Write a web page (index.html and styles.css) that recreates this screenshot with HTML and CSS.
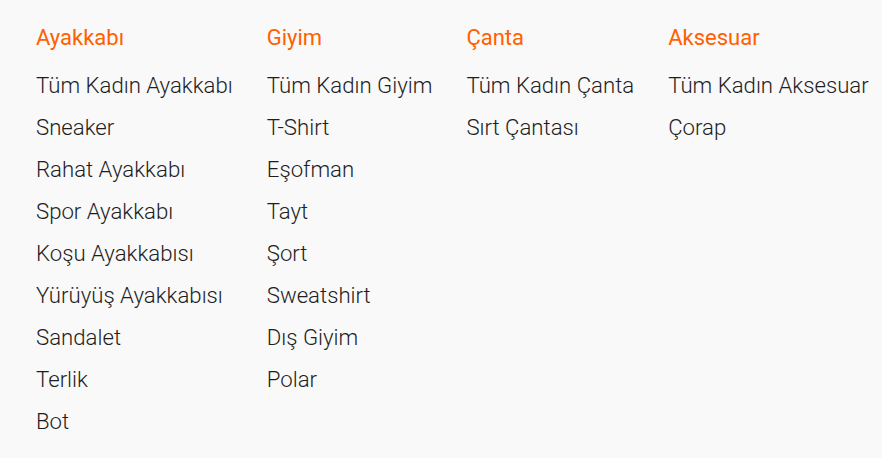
FILE: index.html
```html
<!DOCTYPE html>
<html lang="tr">
<head>
<meta charset="utf-8">
<link rel="stylesheet" href="styles.css">
</head>
<body>
<nav class="menu">
  <div class="col">
    <h3 class="title">Ayakkabı</h3>
    <ul class="list">
      <li>Tüm Kadın Ayakkabı</li>
      <li>Sneaker</li>
      <li>Rahat Ayakkabı</li>
      <li>Spor Ayakkabı</li>
      <li>Koşu Ayakkabısı</li>
      <li>Yürüyüş Ayakkabısı</li>
      <li>Sandalet</li>
      <li>Terlik</li>
      <li>Bot</li>
    </ul>
  </div>
  <div class="col">
    <h3 class="title">Giyim</h3>
    <ul class="list">
      <li>Tüm Kadın Giyim</li>
      <li>T-Shirt</li>
      <li>Eşofman</li>
      <li>Tayt</li>
      <li>Şort</li>
      <li>Sweatshirt</li>
      <li>Dış Giyim</li>
      <li>Polar</li>
    </ul>
  </div>
  <div class="col">
    <h3 class="title">Çanta</h3>
    <ul class="list">
      <li>Tüm Kadın Çanta</li>
      <li>Sırt Çantası</li>
    </ul>
  </div>
  <div class="col">
    <h3 class="title">Aksesuar</h3>
    <ul class="list">
      <li>Tüm Kadın Aksesuar</li>
      <li>Çorap</li>
    </ul>
  </div>
</nav>
</body>
</html>
```
FILE: styles.css
```css
html, body {
  margin: 0;
  padding: 0;
  background: #f9f9f9;
}
body {
  font-family: Roboto, "Liberation Sans", sans-serif;
  color: #1e1e1e;
}
.menu {
  display: flex;
  align-items: flex-start;
  gap: 34px;
  padding: 24px 36px 0 36px;
}
.title {
  margin: 0 0 12px 0;
  font-size: 22px;
  font-weight: 400;
  line-height: 28px;
  color: #ff6000;
}
.list {
  list-style: none;
  margin: 0;
  padding: 0;
}
.list li {
  font-family: "Roboto Light", Roboto, sans-serif;
  font-size: 22.2px;
  font-weight: 300;
  line-height: 42px;
  white-space: nowrap;
}
```
